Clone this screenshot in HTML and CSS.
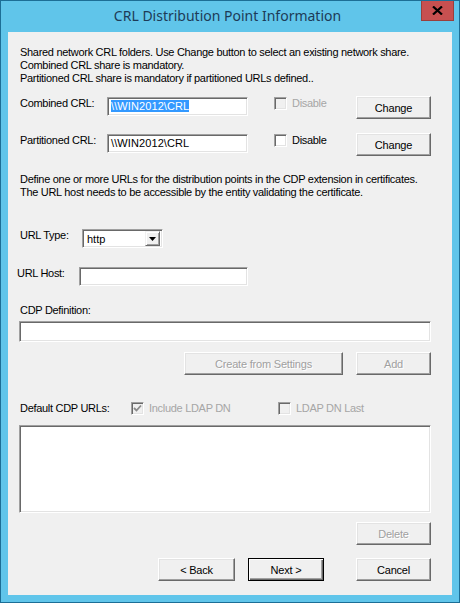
FILE: index.html
```html
<!DOCTYPE html>
<html lang="en">
<head>
    <meta charset="UTF-8">
    <title>CRL Distribution Point Information</title>
    <link rel="stylesheet" href="styles.css">
</head>
<body>
    <div class="window">
        <div class="titlebar">
            <span class="title">CRL Distribution Point Information</span>
            <div class="close">
                <svg width="11" height="9" viewBox="0 0 11 9"><path d="M1 0.5 L10 8.5 M10 0.5 L1 8.5" stroke="#000" stroke-width="2.2"/></svg>
            </div>
        </div>
        <div class="client">
            <p class="note">Shared network CRL folders. Use Change button to select an existing network share.<br>Combined CRL share is mandatory.<br>Partitioned CRL share is mandatory if partitioned URLs defined..</p>

            <div class="row share-row">
                <span class="label share-label">Combined CRL:</span>
                <div class="field share-field"><span class="selected">\\WIN2012\CRL</span></div>
                <label class="check share-check disabled"><span class="box"></span>Disable</label>
                <button class="btn">Change</button>
            </div>
            <div class="row share-row second">
                <span class="label share-label">Partitioned CRL:</span>
                <div class="field share-field"><span>\\WIN2012\CRL</span></div>
                <label class="check share-check"><span class="box"></span>Disable</label>
                <button class="btn">Change</button>
            </div>

            <p class="note note-urls">Define one or more URLs for the distribution points in the CDP extension in certificates.<br>The URL host needs to be accessible by the entity validating the certificate.</p>

            <div class="row type-row">
                <span class="label type-label">URL Type:</span>
                <div class="field select">
                    <span class="select-value">http</span>
                    <span class="arrow"><svg width="7" height="4" viewBox="0 0 7 4"><path d="M0 0 H7 L3.5 4 Z" fill="#000"/></svg></span>
                </div>
            </div>
            <div class="row host-row">
                <span class="label host-label">URL Host:</span>
                <div class="field host-field"></div>
            </div>

            <div class="label cdp-label">CDP Definition:</div>
            <div class="field cdp-field"></div>
            <div class="row action-row">
                <button class="btn wide" disabled>Create from Settings</button>
                <button class="btn" disabled>Add</button>
            </div>

            <div class="row default-row">
                <span class="label default-label">Default CDP URLs:</span>
                <label class="check disabled include-check"><span class="box checked"><svg width="9" height="9" viewBox="0 0 9 9"><path d="M1 4 L3.5 6.5 L8 1.5" fill="none" stroke="#8a8a8a" stroke-width="1.8"/></svg></span>Include LDAP DN</label>
                <label class="check disabled"><span class="box"></span>LDAP DN Last</label>
            </div>
            <div class="field list"></div>

            <div class="row delete-row">
                <button class="btn" disabled>Delete</button>
            </div>
            <div class="row nav-row">
                <button class="btn back">&lt; Back</button>
                <button class="btn next default">Next &gt;</button>
                <button class="btn cancel">Cancel</button>
            </div>
        </div>
    </div>
</body>
</html>
```

FILE: styles.css
```css
body {
    margin: 0;
    font-family: "Liberation Sans", Arial, sans-serif;
    font-size: 11px;
    letter-spacing: -0.3px;
    color: #000;
}
.window {
    width: 460px;
    height: 603px;
    box-sizing: border-box;
    border: 1px solid #1c6e96;
    background-color: #60c5ea;
    padding: 0 7px 7px;
    display: flex;
    flex-direction: column;
}
.titlebar {
    height: 31px;
    margin: 0 -7px;
    padding-right: 5px;
    display: grid;
    grid-template-columns: 1fr auto 1fr;
    align-items: start;
}
.title {
    grid-column: 2;
    font-family: "Noto Sans", "Open Sans", sans-serif;
    font-size: 14px;
    letter-spacing: 0;
    line-height: 30px;
    color: #1d3b57;
}
.close {
    grid-column: 3;
    justify-self: end;
    width: 33px;
    height: 20px;
    box-sizing: border-box;
    background-color: #c75050;
    border: 1px solid #9a3f3c;
    border-top: none;
    display: flex;
    align-items: center;
    justify-content: center;
}
.client {
    flex: 1;
    background-color: #f0f0f0;
    padding: 14px 21px 0 12px;
}
.note {
    margin: 0;
    line-height: 13px;
    white-space: nowrap;
}
.label {
    line-height: 13px;
    white-space: nowrap;
}
.row {
    display: flex;
    align-items: flex-start;
}

/* sunken white fields */
.field {
    box-sizing: border-box;
    background-color: #fff;
    border: 1px solid;
    border-color: #a0a0a0 #fff #fff #a0a0a0;
    box-shadow: inset 1px 1px #696969, inset -1px -1px #e3e3e3;
}

/* raised buttons */
.btn {
    box-sizing: border-box;
    width: 75px;
    height: 23px;
    padding: 0;
    font-family: inherit;
    font-size: 11px;
    letter-spacing: -0.2px;
    color: #000;
    background-color: #f0f0f0;
    border: 1px solid;
    border-color: #fff #696969 #696969 #fff;
    box-shadow: inset -1px -1px #a0a0a0, inset 1px 1px #e3e3e3;
}
.btn:disabled {
    color: #a0a0a0;
    text-shadow: 1px 1px #fff;
}
.btn.default {
    border: 1px solid #000;
    box-shadow: inset 1px 1px #fff, inset -1px -1px #696969, inset -2px -2px #a0a0a0;
}

.check {
    display: flex;
    align-items: center;
    line-height: 13px;
    white-space: nowrap;
}
.check.disabled {
    color: #a6a6a6;
}
.box {
    box-sizing: border-box;
    width: 13px;
    height: 13px;
    margin-right: 5px;
    background-color: #fff;
    border: 1px solid;
    border-color: #a0a0a0 #fff #fff #a0a0a0;
    box-shadow: inset 1px 1px #696969, inset -1px -1px #e3e3e3;
    display: flex;
    align-items: center;
    justify-content: center;
}
.disabled .box {
    background-color: #f0f0f0;
}

.share-row {
    height: 23px;
    margin-top: 11px;
}
.share-row.second {
    margin-top: 14px;
}
.share-label {
    width: 87px;
    margin-top: 1px;
}
.share-field {
    width: 141px;
    height: 19px;
    margin-top: 1px;
    padding: 0 3px;
    line-height: 16px;
    letter-spacing: 0.1px;
}
.selected {
    background-color: #3399ff;
    color: #fff;
}
.share-check {
    margin-left: 26px;
    margin-top: 1px;
}
.share-row .btn {
    margin-left: auto;
}

.note-urls {
    margin-top: 17px;
}

.type-row {
    margin-top: 30px;
}
.type-label {
    width: 62px;
}
.select {
    width: 81px;
    height: 19px;
    display: flex;
    align-items: center;
    padding: 2px;
}
.select-value {
    flex: 1;
    padding-left: 2px;
    line-height: 14px;
    letter-spacing: 0;
}
.arrow {
    box-sizing: border-box;
    width: 15px;
    height: 15px;
    background-color: #f0f0f0;
    border: 1px solid;
    border-color: #f0f0f0 #696969 #696969 #f0f0f0;
    box-shadow: inset 1px 1px #fff, inset -1px -1px #a0a0a0;
    display: flex;
    align-items: center;
    justify-content: center;
}

.host-row {
    margin-top: 19px;
}
.host-label {
    width: 62px;
    margin-left: -3px;
}
.host-field {
    width: 169px;
    height: 19px;
}

.cdp-label {
    margin-top: 18px;
}
.cdp-field {
    width: 412px;
    height: 21px;
    margin: 4px 0 0 -1px;
}
.action-row {
    margin-top: 10px;
    justify-content: flex-end;
    gap: 13px;
}
.btn.wide {
    width: 159px;
}

.default-row {
    margin-top: 27px;
    align-items: center;
}
.default-label {
    width: 111px;
}
.include-check {
    width: 147px;
}

.list {
    width: 412px;
    height: 88px;
    margin: 10px 0 0 -1px;
}

.delete-row {
    margin-top: 9px;
    justify-content: flex-end;
}
.nav-row {
    margin-top: 13px;
    justify-content: flex-end;
}
.btn.back {
    width: 77px;
}
.btn.next {
    width: 76px;
    margin-left: 13px;
}
.btn.cancel {
    margin-left: 32px;
}
```
